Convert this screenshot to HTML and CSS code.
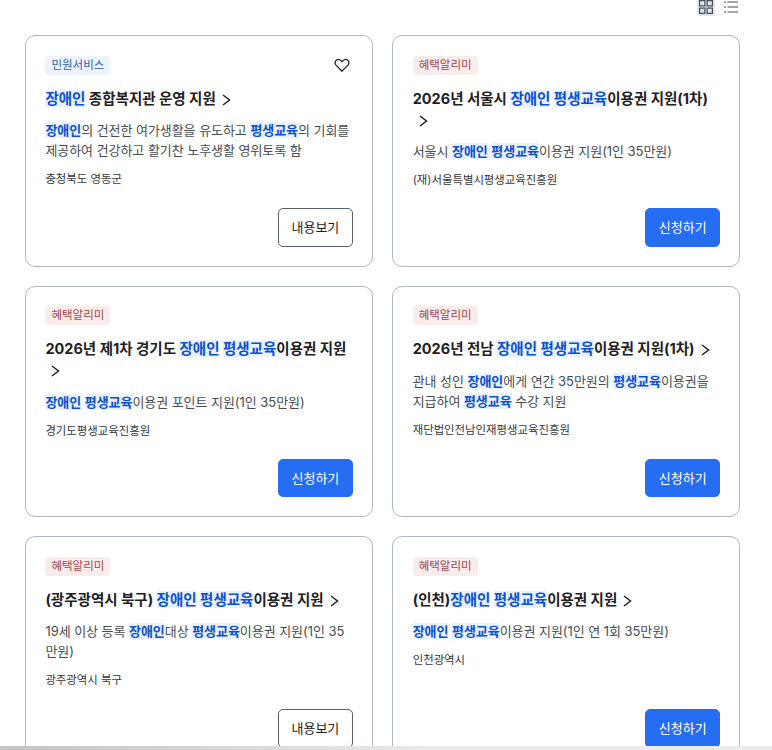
FILE: index.html
```html
<!DOCTYPE html>
<html lang="ko">

<head>
    <meta charset="utf-8">
    <meta name="viewport" content="width=device-width, initial-scale=1">
    <title>서비스 목록</title>
    <link rel="stylesheet" href="styles.css">
</head>

<body>
    <div class="view_btns">
        <button class="view_btn on" type="button" aria-label="카드형">
            <svg width="14" height="14" viewBox="0 0 14 14" fill="none" stroke="#464c53" stroke-width="1.2">
                <rect x="0.6" y="0.6" width="5.3" height="5.3" />
                <rect x="8.1" y="0.6" width="5.3" height="5.3" />
                <rect x="0.6" y="8.1" width="5.3" height="5.3" />
                <rect x="8.1" y="8.1" width="5.3" height="5.3" />
            </svg>
        </button>
        <button class="view_btn" type="button" aria-label="목록형">
            <svg width="14" height="14" viewBox="0 0 14 14" fill="none" stroke="#464c53" stroke-width="1">
                <path d="M0 2h2M0 7h2M0 12h2" />
                <path d="M3.500 2H14M3.500 7H14M3.500 12H14" />
            </svg>
        </button>
    </div>

    <ul class="card_list">
        <li class="card">
            <div class="card_top">
                <span class="tag tag_blue">민원서비스</span>
                <svg class="heart" width="16" height="16" viewBox="0 0 16 16" fill="none" stroke="#1e2124" stroke-width="1.3">
                    <path d="M8 14.2 2.2 8.4C.6 6.8.8 4.4 2.3 3.2c1.6-1.200 3.900-.8 5.700 1.500 1.800-2.300 4.100-2.700 5.700-1.500 1.500 1.200 1.700 3.600.1 5.200z" />
                </svg>
            </div>
            <h3 class="card_title"><em>장애인</em> 종합복지관 운영 지원<svg class="chev" width="9" height="12" viewBox="0 0 9 12" fill="none" stroke="#1e2124" stroke-width="1.500"><path d="m1 1 6.500 5L1 11" /></svg></h3>
            <p class="card_desc"><b>장애인</b>의 건전한 여가생활을 유도하고 <b>평생교육</b>의 기회를 제공하여 건강하고 활기찬 노후생활 영위토록 함</p>
            <p class="card_org">충청북도 영동군</p>
            <div class="card_foot"><a class="btn btn_line" href="#">내용보기</a></div>
        </li>
        <li class="card">
            <div class="card_top"><span class="tag tag_red">혜택알리미</span></div>
            <h3 class="card_title">2026년 서울시 <em>장애인</em> <em>평생교육</em>이용권 지원(1차)<svg class="chev" width="9" height="12" viewBox="0 0 9 12" fill="none" stroke="#1e2124" stroke-width="1.500"><path d="m1 1 6.500 5L1 11" /></svg></h3>
            <p class="card_desc">서울시 <b>장애인</b> <b>평생교육</b>이용권 지원(1인 35만원)</p>
            <p class="card_org">(재)서울특별시평생교육진흥원</p>
            <div class="card_foot"><a class="btn btn_fill" href="#">신청하기</a></div>
        </li>
        <li class="card">
            <div class="card_top"><span class="tag tag_red">혜택알리미</span></div>
            <h3 class="card_title">2026년 제1차 경기도 <em>장애인</em> <em>평생교육</em>이용권 지원<svg class="chev" width="9" height="12" viewBox="0 0 9 12" fill="none" stroke="#1e2124" stroke-width="1.500"><path d="m1 1 6.500 5L1 11" /></svg></h3>
            <p class="card_desc"><b>장애인</b> <b>평생교육</b>이용권 포인트 지원(1인 35만원)</p>
            <p class="card_org">경기도평생교육진흥원</p>
            <div class="card_foot"><a class="btn btn_fill" href="#">신청하기</a></div>
        </li>
        <li class="card">
            <div class="card_top"><span class="tag tag_red">혜택알리미</span></div>
            <h3 class="card_title">2026년 전남 <em>장애인</em> <em>평생교육</em>이용권 지원(1차)<svg class="chev" width="9" height="12" viewBox="0 0 9 12" fill="none" stroke="#1e2124" stroke-width="1.500"><path d="m1 1 6.500 5L1 11" /></svg></h3>
            <p class="card_desc">관내 성인 <b>장애인</b>에게 연간 35만원의 <b>평생교육</b>이용권을 지급하여 <b>평생교육</b> 수강 지원</p>
            <p class="card_org">재단법인전남인재평생교육진흥원</p>
            <div class="card_foot"><a class="btn btn_fill" href="#">신청하기</a></div>
        </li>
        <li class="card">
            <div class="card_top"><span class="tag tag_red">혜택알리미</span></div>
            <h3 class="card_title">(광주광역시 북구) <em>장애인</em> <em>평생교육</em>이용권 지원<svg class="chev" width="9" height="12" viewBox="0 0 9 12" fill="none" stroke="#1e2124" stroke-width="1.500"><path d="m1 1 6.500 5L1 11" /></svg></h3>
            <p class="card_desc">19세 이상 등록 <b>장애인</b>대상 <b>평생교육</b>이용권 지원(1인 35만원)</p>
            <p class="card_org">광주광역시 북구</p>
            <div class="card_foot"><a class="btn btn_line" href="#">내용보기</a></div>
        </li>
        <li class="card">
            <div class="card_top"><span class="tag tag_red">혜택알리미</span></div>
            <h3 class="card_title">(인천)<em>장애인</em> <em>평생교육</em>이용권 지원<svg class="chev" width="9" height="12" viewBox="0 0 9 12" fill="none" stroke="#1e2124" stroke-width="1.500"><path d="m1 1 6.500 5L1 11" /></svg></h3>
            <p class="card_desc"><b>장애인</b> <b>평생교육</b>이용권 지원(1인 연 1회 35만원)</p>
            <p class="card_org">인천광역시</p>
            <div class="card_foot"><a class="btn btn_fill" href="#">신청하기</a></div>
        </li>
    </ul>

    <div class="scroll_bar"></div>
</body>

</html>
```

FILE: styles.css
```css
html,
body {
    height: 750px;
    overflow: hidden;
}

body {
    margin: 0;
    padding: 0 32px 0 25px;
    background: #fff;
    color: #1e2124;
    font-family: Inter, "Noto Sans CJK KR", "Noto Sans", sans-serif;
}

.view_btns {
    display: flex;
    justify-content: flex-end;
    gap: 7px;
    height: 35px;
}

.view_btn {
    display: flex;
    justify-content: center;
    width: 18px;
    height: 16px;
    padding: 0;
    border: 0;
    border-radius: 0 0 3px 3px;
    background: none;
}

.view_btn.on {
    background: #dde5f0;
}

.card_list {
    display: grid;
    grid-template-columns: 347.6px 347.6px;
    grid-auto-rows: min-content;
    gap: 19px 19.7px;
    margin: 0;
    padding: 0;
    list-style: none;
}

.card {
    display: flex;
    flex-direction: column;
    box-sizing: border-box;
    height: 231.500px;
    padding: 19px 19px 19px 19.4px;
    border: 1px solid #b1b8be;
    border-radius: 10px;
}

.card_top {
    display: flex;
    align-items: center;
    justify-content: space-between;
    height: 20px;
}

.heart {
    margin-right: 3px;
}

.tag {
    padding: 0 6px;
    border-radius: 4px;
    font-size: 11.500px;
    line-height: 19px;
}

.tag_blue {
    background: #eef4fd;
    color: #2a62b8;
}

.tag_red {
    background: #fbecec;
    color: #a0444a;
}

.card_title {
    margin: 12.500px 0 0;
    font-size: 14.500px;
    font-weight: 700;
    line-height: 21px;
}

.card_title em {
    background: #e8f1fd;
    color: #0b50d0;
    font-style: normal;
}

.chev {
    margin-left: 6px;
    vertical-align: -2px;
}

.card_desc {
    margin: 11.500px 0 0;
    color: #464c53;
    font-size: 13px;
    letter-spacing: -0.05px;
    line-height: 20px;
}

.card_desc b {
    background: #e8f1fd;
    color: #0b50d0;
}

.card_org {
    margin: 9px 0 0;
    color: #33363d;
    font-size: 11.400px;
    line-height: 20px;
}

.card_foot {
    display: flex;
    justify-content: flex-end;
    margin-top: auto;
}

.btn {
    box-sizing: border-box;
    width: 74.400px;
    height: 38.500px;
    border-radius: 5px;
    font-size: 13px;
    line-height: 36.500px;
    text-align: center;
    text-decoration: none;
}

.btn_line {
    border: 1px solid #58616a;
    color: #1e2124;
}

.btn_fill {
    border: 1px solid #256ef4;
    background: #256ef4;
    color: #fff;
}

.scroll_bar {
    position: fixed;
    left: 0;
    right: 0;
    bottom: 0;
    height: 4px;
    background: linear-gradient(90deg, #c4c4c4, #ececec 60%);
}
```
